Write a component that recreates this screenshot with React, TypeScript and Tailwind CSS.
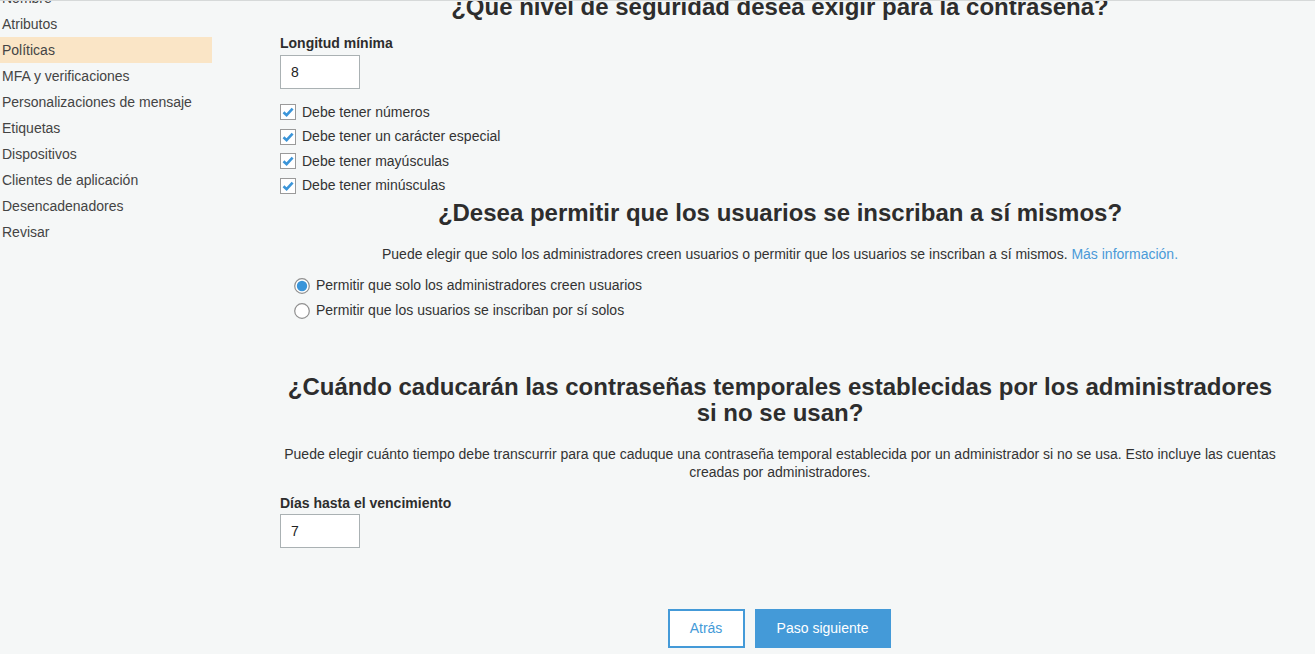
import React from "react";

const sidebar = [
  "Nombre",
  "Atributos",
  "Políticas",
  "MFA y verificaciones",
  "Personalizaciones de mensaje",
  "Etiquetas",
  "Dispositivos",
  "Clientes de aplicación",
  "Desencadenadores",
  "Revisar",
];

function Check() {
  return (
    <svg width="16" height="16" viewBox="0 0 16 16" className="shrink-0">
      <rect x="0.5" y="0.5" width="15" height="15" fill="#fff" stroke="#9a9a9a" />
      <path d="M3.5 8.2 L6.6 11.2 L12.6 4.6" fill="none" stroke="#3b95d9" strokeWidth="2.6" strokeLinecap="butt" />
    </svg>
  );
}

function Radio({ on }: { on?: boolean }) {
  return (
    <svg width="16" height="16" viewBox="0 0 16 16" className="shrink-0">
      <circle cx="8" cy="8" r="7.3" fill="#fff" stroke="#8f8f8f" strokeWidth="1.2" />
      {on && <circle cx="8" cy="8" r="5.2" fill="#3b95d9" />}
    </svg>
  );
}

export default function App() {
  const font = { fontFamily: '"Liberation Sans", Arial, sans-serif' };
  return (
    <div className="h-[654px] w-[1315px] overflow-hidden bg-[#f5f7f7] border-t border-[#d6d9d9] text-[14px] text-[#333]" style={font}>
      <div className="flex">
        <div className="w-[212px] shrink-0 -mt-[16px]">
          {sidebar.map((s) => (
            <div
              key={s}
              className={`h-[26px] leading-[26px] pl-[2px] text-[14px] text-[#444] ${s === "Políticas" ? "bg-[#fae5c6] text-[#222]" : ""}`}
            >
              {s}
            </div>
          ))}
        </div>
        <div className="ml-[68px] w-[1000px] -mt-[8px]">
          <h2 className="text-center font-bold text-[24px] leading-[28px] text-[#2d2d2d]">
            ¿Qué nivel de seguridad desea exigir para la contraseña?
          </h2>
          <div className="mt-[13px] font-bold text-[14px] leading-[18px] text-[#2d2d2d]">Longitud mínima</div>
          <div className="mt-[3px] w-[80px] h-[34px] bg-white border border-[#aab1b3] flex items-center pl-[10px] text-[14px] text-[#222]">8</div>
          <div className="mt-[11px] flex flex-col">
            {["Debe tener números", "Debe tener un carácter especial", "Debe tener mayúsculas", "Debe tener minúsculas"].map((t) => (
              <div key={t} className="h-[24.5px] flex items-center gap-[6px]">
                <Check />
                <span className="text-[14px] text-[#333]">{t}</span>
              </div>
            ))}
          </div>
          <h2 className="mt-[1px] text-center font-bold text-[24px] leading-[28px] text-[#2d2d2d]">
            ¿Desea permitir que los usuarios se inscriban a sí mismos?
          </h2>
          <p className="mt-[18px] text-center text-[14px] leading-[18px] text-[#333]">
            Puede elegir que solo los administradores creen usuarios o permitir que los usuarios se inscriban a sí mismos.{" "}
            <span className="text-[#4a9ad8]">Más información.</span>
          </p>
          <div className="mt-[10px] flex flex-col pl-[14px]">
            {[
              ["Permitir que solo los administradores creen usuarios", true],
              ["Permitir que los usuarios se inscriban por sí solos", false],
            ].map(([t, on]) => (
              <div key={t as string} className="h-[25px] flex items-center gap-[6px]">
                <Radio on={on as boolean} />
                <span className="text-[14px] text-[#333]">{t as string}</span>
              </div>
            ))}
          </div>
          <h2 className="mt-[51px] text-center font-bold text-[24px] leading-[26px] text-[#2d2d2d]">
            ¿Cuándo caducarán las contraseñas temporales establecidas por los administradores
            <br />
            si no se usan?
          </h2>
          <p className="mt-[19px] text-center text-[14px] leading-[18px] text-[#333] px-[2px]">
            Puede elegir cuánto tiempo debe transcurrir para que caduque una contraseña temporal establecida por un administrador si no se usa. Esto incluye las cuentas creadas por administradores.
          </p>
          <div className="mt-[13px] font-bold text-[14px] leading-[18px] text-[#2d2d2d]">Días hasta el vencimiento</div>
          <div className="mt-[2px] w-[80px] h-[34px] bg-white border border-[#aab1b3] flex items-center pl-[10px] text-[14px] text-[#222]">7</div>
          <div className="mt-[61px] flex justify-center gap-[10px] pr-[2px]">
            <button className="w-[77px] h-[39px] bg-white border-2 border-[#449ad8] text-[#449ad8] text-[14px]">Atrás</button>
            <button className="w-[136px] h-[39px] bg-[#449ad8] text-white text-[14px]">Paso siguiente</button>
          </div>
        </div>
      </div>
    </div>
  );
}
